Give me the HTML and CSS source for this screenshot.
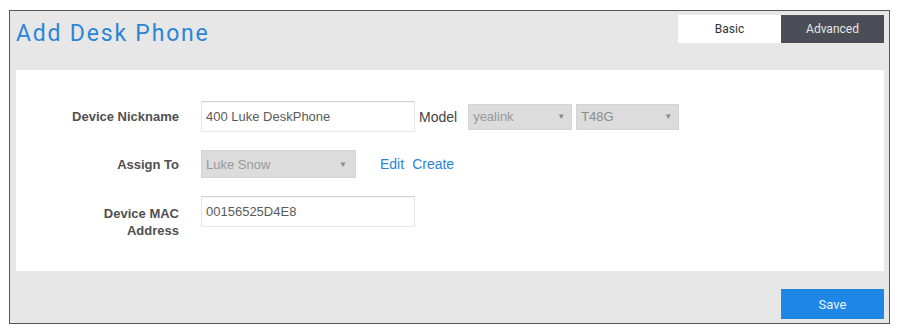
FILE: index.html
```html
<!DOCTYPE html>
<html>
<head>
<meta charset="utf-8">
<link rel="stylesheet" href="styles.css">
</head>
<body>
<div class="frame">
  <div class="header">
    <h1 class="title">Add Desk Phone</h1>
    <div class="tabs">
      <span class="tab tab-basic">Basic</span>
      <span class="tab tab-adv">Advanced</span>
    </div>
  </div>
  <div class="panel">
    <div class="row row-1">
      <label class="label">Device Nickname</label>
      <div class="input input-wide">400 Luke DeskPhone</div>
      <span class="model-label">Model</span>
      <div class="select select-vendor"><span>yealink</span><span class="arrow">&#9660;</span></div>
      <div class="select select-model"><span>T48G</span><span class="arrow">&#9660;</span></div>
    </div>
    <div class="row row-2">
      <label class="label">Assign To</label>
      <div class="select select-user"><span>Luke Snow</span><span class="arrow">&#9660;</span></div>
      <a class="link link-edit">Edit</a>
      <a class="link">Create</a>
    </div>
    <div class="row row-3">
      <label class="label label-top">Device MAC<br>Address</label>
      <div class="input input-wide">00156525D4E8</div>
    </div>
  </div>
  <div class="footer">
    <button class="save">Save</button>
  </div>
</div>
</body>
</html>
```
FILE: styles.css
```css
html, body {
  margin: 0;
  padding: 0;
  background: #ffffff;
}
body {
  font-family: "Liberation Sans", Arial, sans-serif;
}
.frame {
  margin: 10px 0 0 9px;
  width: 881px;
  box-sizing: border-box;
  border: 1px solid #555;
  background: #e7e7e7;
  padding: 0 5px 0 6px;
}
.header {
  height: 59px;
  display: flex;
  justify-content: space-between;
  align-items: flex-start;
}
.title {
  margin: 0;
  padding-top: 9px;
  font-family: Roboto, sans-serif;
  font-weight: 400;
  font-size: 23px;
  letter-spacing: 1.8px;
  line-height: 28px;
  color: #2a85d5;
}
.tabs {
  display: flex;
  margin-top: 4px;
}
.tab {
  width: 103px;
  height: 28px;
  display: flex;
  align-items: center;
  justify-content: center;
  font-family: Roboto, sans-serif;
  font-size: 12px;
}
.tab-basic {
  background: #ffffff;
  color: #333;
}
.tab-adv {
  background: #4b4e56;
  color: #e6e6e6;
}
.panel {
  background: #ffffff;
  height: 201px;
  box-sizing: border-box;
  padding-top: 31px;
}
.row {
  display: flex;
  align-items: center;
}
.row-2 {
  margin-top: 18px;
}
.row-3 {
  margin-top: 18px;
  align-items: flex-start;
}
.label {
  width: 163px;
  box-sizing: border-box;
  text-align: right;
  font-weight: 700;
  font-size: 13px;
  line-height: 17px;
  color: #505050;
  margin-right: 22px;
}
.label-top {
  padding-top: 9px;
}
.input {
  height: 31px;
  box-sizing: border-box;
  border: 1px solid #e6e6e6;
  border-top-color: #d2d2d2;
  box-shadow: inset 0 1px 1px rgba(0,0,0,0.05);
  padding: 0 4px;
  display: flex;
  align-items: center;
  font-size: 13px;
  color: #5a5a5a;
}
.input-wide {
  width: 214px;
}
.model-label {
  margin-left: 4px;
  font-size: 14px;
  color: #444;
}
.select {
  height: 26px;
  box-sizing: border-box;
  background: #dcdcdc;
  border: 1px solid #d4d4d4;
  display: flex;
  align-items: center;
  justify-content: space-between;
  padding: 0 6px 0 4px;
  font-size: 13px;
  color: #999;
}
.arrow {
  font-size: 8px;
  color: #8a8a8a;
}
.select-vendor {
  width: 104px;
  margin-left: 11px;
}
.select-model {
  width: 103px;
  margin-left: 4px;
  color: #8c8c8c;
}
.select-user {
  width: 155px;
  height: 28px;
  padding-right: 8px;
}
.link {
  font-size: 14px;
  color: #2a85d5;
}
.link-edit {
  margin-left: 24px;
  margin-right: 8px;
}
.footer {
  height: 52px;
  box-sizing: border-box;
  padding-top: 18px;
  display: flex;
  justify-content: flex-end;
}
.save {
  width: 103px;
  height: 30px;
  border: none;
  background: #1e86e4;
  color: #eaf3fd;
  font-family: Roboto, sans-serif;
  font-size: 13px;
  padding: 0;
}
```
